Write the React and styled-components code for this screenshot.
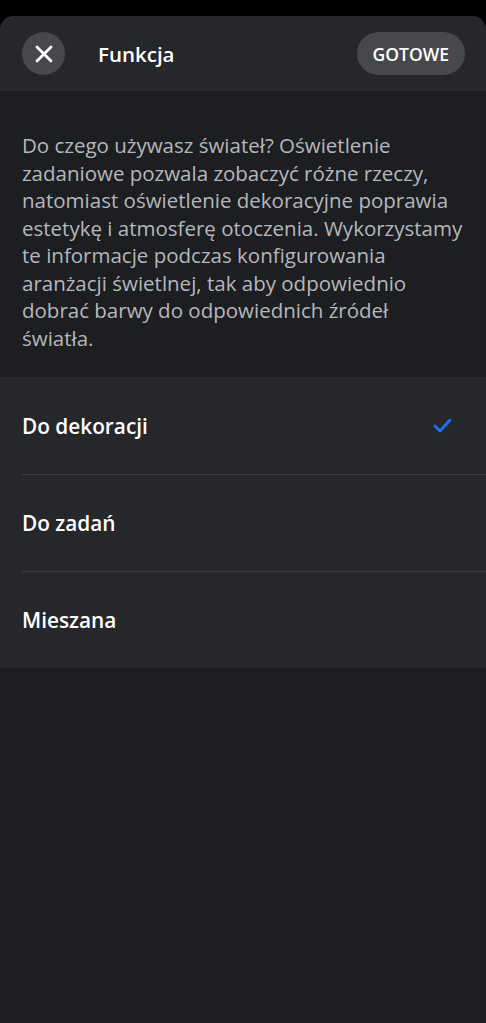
import React from "react";
import styled, { createGlobalStyle } from "styled-components";

const Global = createGlobalStyle`
  html, body { margin: 0; padding: 0; background: #000; }
  body { font-family: "Open Sans", "Noto Sans", sans-serif; -webkit-font-smoothing: antialiased; }
`;

const Screen = styled.div`
  width: 486px;
  min-height: 1023px;
  background: #000;
  padding-top: 16px;
  box-sizing: border-box;
  display: flex;
  flex-direction: column;
`;

const Sheet = styled.div`
  flex: 1;
  display: flex;
  flex-direction: column;
  background: #1c1e22;
  border-radius: 14px 14px 0 0;
  overflow: hidden;
`;

const Header = styled.header`
  height: 75px;
  background: #26272b;
  display: flex;
  align-items: center;
  padding: 0 22px;
  box-sizing: border-box;
`;

const CloseButton = styled.button`
  width: 43px;
  height: 43px;
  border-radius: 50%;
  border: none;
  background: #47484c;
  display: flex;
  align-items: center;
  justify-content: center;
  padding: 0;
  margin-right: 33px;
`;

const Title = styled.h1`
  flex: 1;
  margin: 0;
  color: #fff;
  font-size: 20.5px;
  font-weight: 600;
`;

const DoneButton = styled.button`
  height: 43px;
  padding: 0 16px;
  border: none;
  border-radius: 22px;
  background: #47484c;
  color: #fff;
  font-family: inherit;
  font-size: 17.5px;
  font-weight: 600;
  margin-right: -1px;
`;

const Description = styled.p`
  margin: 0;
  padding: 41px 22px 25px;
  color: #b6b7bb;
  font-size: 20.5px;
  line-height: 27.5px;
  white-space: nowrap;
`;

const List = styled.ul`
  list-style: none;
  margin: 0;
  padding: 0;
  background: #26272b;
`;

const Row = styled.li`
  height: 97px;
  display: flex;
  align-items: center;
  justify-content: space-between;
  margin-left: 22px;
  padding-right: 34px;
  border-top: ${(p) => (p.$first ? "none" : "1px solid #3c3d41")};
  box-sizing: border-box;
`;

const Label = styled.span`
  color: #fff;
  font-size: 20.8px;
  font-weight: 600;
`;

const options = [
  { label: "Do dekoracji", selected: true },
  { label: "Do zadań" },
  { label: "Mieszana" },
];

const lines = [
  "Do czego używasz świateł? Oświetlenie",
  "zadaniowe pozwala zobaczyć różne rzeczy,",
  "natomiast oświetlenie dekoracyjne poprawia",
  "estetykę i atmosferę otoczenia. Wykorzystamy",
  "te informacje podczas konfigurowania",
  "aranżacji świetlnej, tak aby odpowiednio",
  "dobrać barwy do odpowiednich źródeł",
  "światła.",
];

export default function App() {
  return (
    <>
      <Global />
      <Screen>
        <Sheet>
          <Header>
            <CloseButton aria-label="Zamknij">
              <svg width="18" height="18" viewBox="0 0 18 18">
                <path d="M2 2L16 16M16 2L2 16" stroke="#fff" strokeWidth="2.8" strokeLinecap="round" />
              </svg>
            </CloseButton>
            <Title>Funkcja</Title>
            <DoneButton>GOTOWE</DoneButton>
          </Header>
          <Description>
            {lines.map((l, i) => (
              <React.Fragment key={i}>
                {l}
                {i < lines.length - 1 && <br />}
              </React.Fragment>
            ))}
          </Description>
          <List>
            {options.map((o, i) => (
              <Row key={o.label} $first={i === 0}>
                <Label>{o.label}</Label>
                {o.selected && (
                  <svg width="19" height="15" viewBox="0 0 19 15">
                    <path d="M2 8L7 13L17 2" fill="none" stroke="#1f6fe8" strokeWidth="3" strokeLinecap="round" strokeLinejoin="round" />
                  </svg>
                )}
              </Row>
            ))}
          </List>
        </Sheet>
      </Screen>
    </>
  );
}
